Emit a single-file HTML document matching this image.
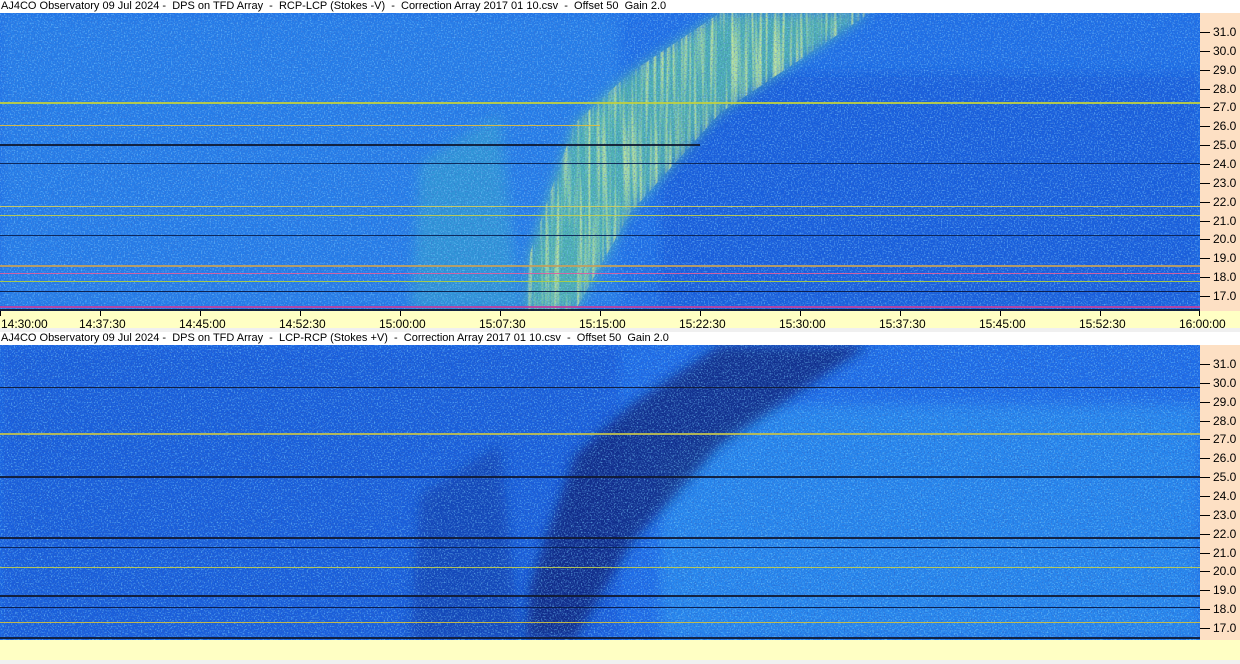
<!DOCTYPE html>
<html><head><meta charset="utf-8"><style>
body{margin:0;width:1240px;height:664px;overflow:hidden;background:#f0f0f0;font-family:"Liberation Sans",sans-serif;font-size:11px;position:relative}
.t{position:absolute;left:0;width:1240px;height:13px;background:#fff;line-height:13px;white-space:pre;color:#000;padding-left:1px}
.ax{position:absolute;background:#fde0c4;left:1200px;width:40px}
.lbl{position:absolute;left:1213px;font-size:12px}
.tk{position:absolute;left:1200px;width:10px;height:1px;background:#000}
.ta{position:absolute;left:0;width:1240px;background:#ffffc4}
.tl{position:absolute;top:317px;font-size:12px}
.tt{position:absolute;top:311px;width:1px;height:5px;background:#000}
svg{position:absolute;left:0}
</style></head><body>
<div class="t" style="top:0">AJ4CO Observatory 09 Jul 2024 -  DPS on TFD Array  -  RCP-LCP (Stokes -V)  -  Correction Array 2017 01 10.csv  -  Offset 50  Gain 2.0</div>
<svg style="top:13px" width="1200" height="298">
<defs>
<filter id="b"><feGaussianBlur stdDeviation="6"/></filter>
<filter id="n" x="0" y="0" width="100%" height="100%"><feTurbulence type="fractalNoise" baseFrequency="0.7" numOctaves="1" seed="3"/><feColorMatrix values="0 0 0 0 0.2  0 0 0 0 0.6  0 0 0 0 1  4 0 0 0 -2"/></filter>
<filter id="d" x="0" y="0" width="100%" height="100%"><feTurbulence type="fractalNoise" baseFrequency="0.7" numOctaves="1" seed="9"/><feColorMatrix values="0 0 0 0 0.05  0 0 0 0 0.15  0 0 0 0 0.6  4 0 0 0 -2"/></filter>
<filter id="v" x="0" y="0" width="100%" height="100%"><feTurbulence type="fractalNoise" baseFrequency="0.35 0.01" numOctaves="1" seed="5"/><feColorMatrix values="0 0 0 0 0.75  0 0 0 0 0.9  0 0 0 0 0.3  3 0 0 0 -1.3"/></filter>
<clipPath id="c1"><polygon points="525,298 575,298 630,200 720,100 870,0 720,0 630,60 575,110 550,180 530,240"/></clipPath>
</defs>
<rect width="1200" height="298" fill="#1e6ee6"/>
<rect x="0" y="0" width="620" height="298" fill="#2a86ea" opacity=".6" filter="url(#b)"/>
<polygon points="660,298 660,120 760,60 1200,60 1200,298" fill="#1858d8" opacity=".7" filter="url(#b)"/>
<polygon points="410,298 420,150 500,100 520,298" fill="#40b8c0" opacity=".4" filter="url(#b)"/>
<polygon points="525,298 575,298 630,200 720,100 870,0 720,0 630,60 575,110 550,180 530,240" fill="#60c898" opacity=".7" filter="url(#b)"/>
<rect width="1200" height="298" filter="url(#v)" clip-path="url(#c1)" opacity=".8"/>
<rect width="1200" height="298" filter="url(#n)" opacity=".6"/>
<rect width="1200" height="298" filter="url(#d)" opacity=".5"/>
<g opacity=".9">
<rect y="89" width="1200" height="2" fill="#c0d040"/>
<rect y="112" width="600" height="1" fill="#e0c040"/>
<rect y="131" width="700" height="2" fill="#101830"/>
<rect y="150" width="1200" height="1" fill="#0a2050"/>
<rect y="193" width="1200" height="1" fill="#d0d060"/>
<rect y="202" width="1200" height="1" fill="#c0d050"/>
<rect y="222" width="1200" height="1" fill="#0a2050"/>
<rect y="252" width="1200" height="2" fill="#c0a060"/>
<rect y="260" width="1200" height="1" fill="#e060a0"/>
<rect y="268" width="1200" height="1" fill="#b0d040"/>
<rect y="278" width="1200" height="1" fill="#0a1840"/>
<rect y="293" width="1200" height="2" fill="#c040a0"/>
<rect y="296" width="1200" height="2" fill="#101830"/>
</g>
</svg>
<div class="ax" style="top:13px;height:298px"></div>
<div class="ta" style="top:311px;height:17px"></div>
<div class="t" style="top:332px">AJ4CO Observatory 09 Jul 2024 -  DPS on TFD Array  -  LCP-RCP (Stokes +V)  -  Correction Array 2017 01 10.csv  -  Offset 50  Gain 2.0</div>
<svg style="top:345px" width="1200" height="295">
<defs>
<filter id="b2"><feGaussianBlur stdDeviation="6"/></filter>
<filter id="n2" x="0" y="0" width="100%" height="100%"><feTurbulence type="fractalNoise" baseFrequency="0.7" numOctaves="1" seed="7"/><feColorMatrix values="0 0 0 0 0.2  0 0 0 0 0.65  0 0 0 0 1  4 0 0 0 -2"/></filter>
<filter id="d2" x="0" y="0" width="100%" height="100%"><feTurbulence type="fractalNoise" baseFrequency="0.7" numOctaves="1" seed="11"/><feColorMatrix values="0 0 0 0 0.03  0 0 0 0 0.1  0 0 0 0 0.5  4 0 0 0 -2"/></filter>
</defs>
<rect width="1200" height="295" fill="#1e6ce8"/>
<rect x="0" y="0" width="620" height="295" fill="#1454d4" opacity=".6" filter="url(#b2)"/>
<polygon points="660,295 660,120 760,60 1200,60 1200,295" fill="#2c90f0" opacity=".7" filter="url(#b2)"/>
<polygon points="410,295 420,150 500,100 520,295" fill="#0c3098" opacity=".5" filter="url(#b2)"/>
<polygon points="525,295 575,295 630,200 720,100 870,0 720,0 630,60 575,110 550,180 530,240" fill="#081c70" opacity=".75" filter="url(#b2)"/>
<rect width="1200" height="295" filter="url(#n2)" opacity=".6"/>
<rect width="1200" height="295" filter="url(#d2)" opacity=".5"/>
<g opacity=".9">
<rect y="42" width="1200" height="1" fill="#101830"/>
<rect y="88" width="1200" height="2" fill="#c0c050"/>
<rect y="131" width="1200" height="2" fill="#101830"/>
<rect y="192" width="1200" height="2" fill="#101830"/>
<rect y="202" width="1200" height="1" fill="#0a2050"/>
<rect y="222" width="1200" height="1" fill="#c0d050"/>
<rect y="250" width="1200" height="2" fill="#101830"/>
<rect y="262" width="1200" height="1" fill="#0a1840"/>
<rect y="277" width="1200" height="1" fill="#d0c040"/>
<rect y="292" width="1200" height="2" fill="#101830"/>
</g>
</svg>
<div class="ax" style="top:345px;height:295px"></div>
<div class="ta" style="top:640px;height:20px"></div>
<div id="labels"></div>
<script>
var h='';
for(var f=31;f>=17;f--){
 var y1=32+(31-f)*18.86, y2=364+(31-f)*18.86;
 h+='<div class="tk" style="top:'+Math.round(y1)+'px"></div><div class="lbl" style="top:'+Math.round(y1-7)+'px">'+f+'.0</div>';
 h+='<div class="tk" style="top:'+Math.round(y2)+'px"></div><div class="lbl" style="top:'+Math.round(y2-7)+'px">'+f+'.0</div>';
}
var ts=['14:30:00','14:37:30','14:45:00','14:52:30','15:00:00','15:07:30','15:15:00','15:22:30','15:30:00','15:37:30','15:45:00','15:52:30','16:00:00'];
for(var i=0;i<13;i++){
 var x=i*100; h+='<div class="tt" style="left:'+(i==12?1199:x)+'px"></div>';
 var l=i==0?1:x-21; h+='<div class="tl" style="left:'+l+'px">'+ts[i]+'</div>';
}
document.getElementById('labels').innerHTML=h;
</script>
</body></html>
